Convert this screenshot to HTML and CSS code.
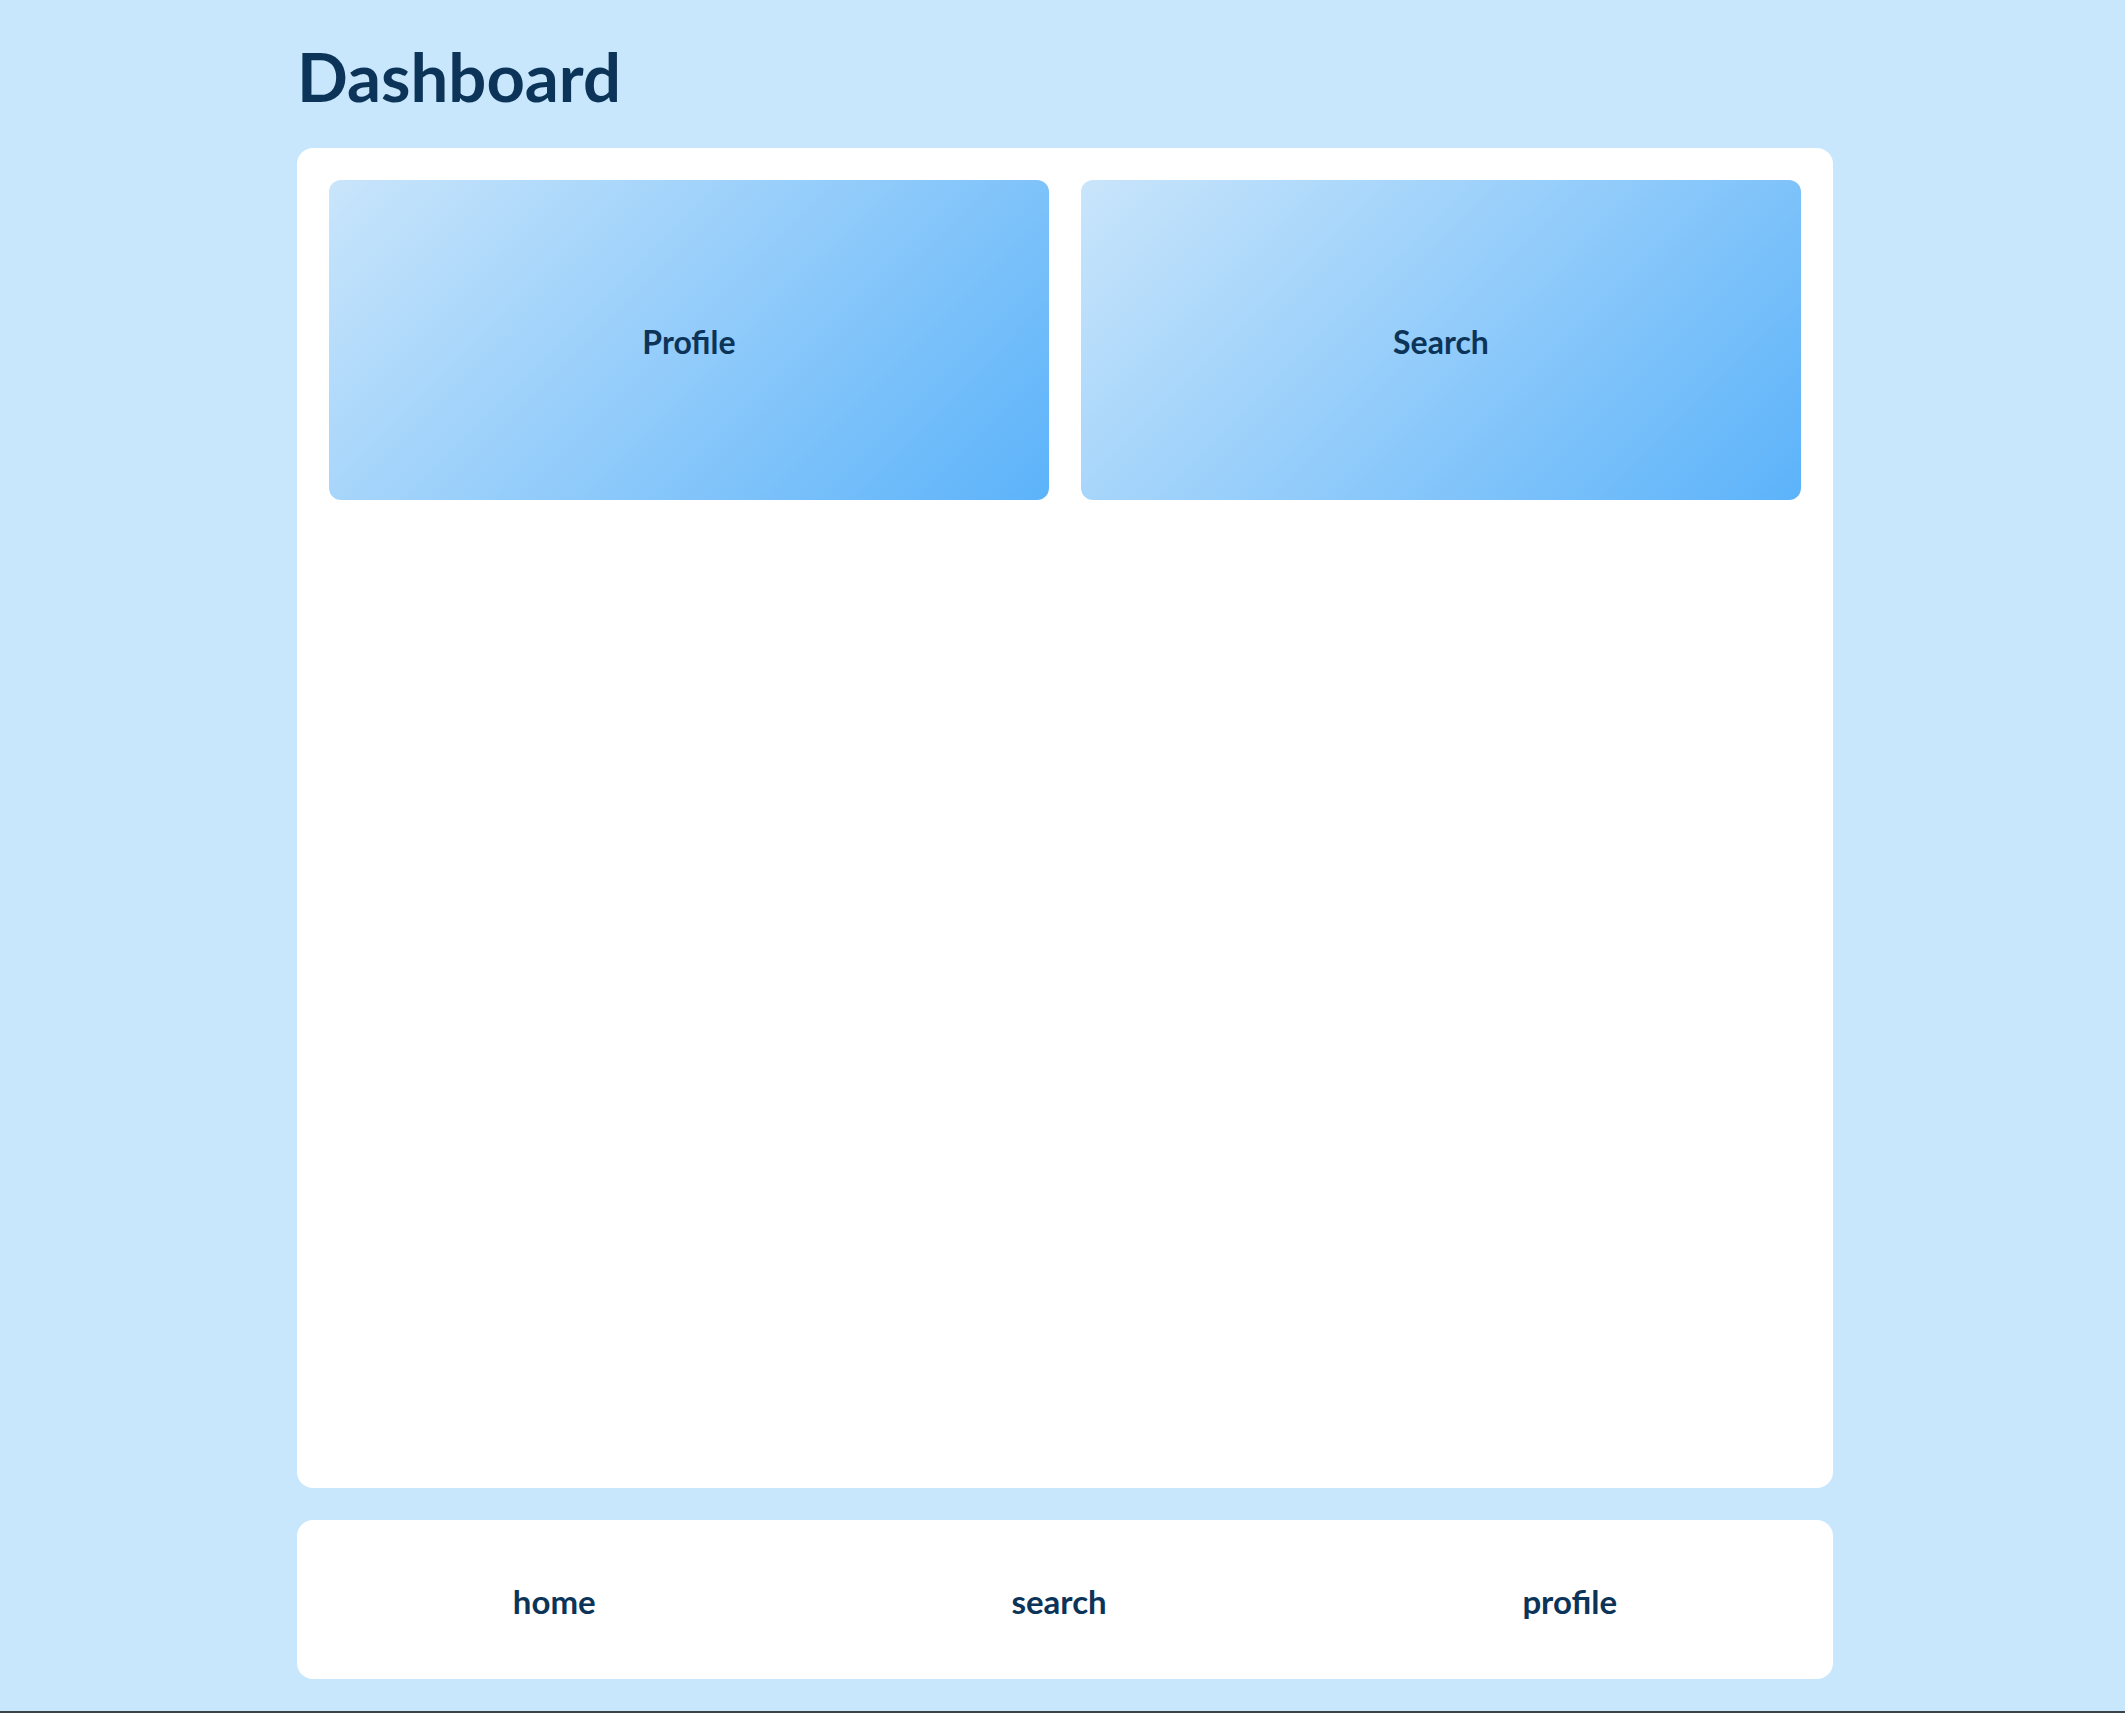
FILE: index.html
```html
<!DOCTYPE html>
<html lang="en">
<head>
    <meta charset="UTF-8">
    <meta name="viewport" content="width=device-width, initial-scale=1.0">
    <title>Dashboard</title>
    <link rel="stylesheet" href="styles.css">
</head>
<body>
    <div class="app">
        <header>
            <h1>Dashboard</h1>
        </header>
        <main class="panel">
            <div class="tiles">
                <a class="tile">Profile</a>
                <a class="tile">Search</a>
            </div>
        </main>
        <nav class="tabbar">
            <a>home</a>
            <a>search</a>
            <a>profile</a>
        </nav>
    </div>
</body>
</html>
```

FILE: styles.css
```css
:root {
    --bg: #c9e7fc;
    --navy: #0c3458;
    --white: #ffffff;
    --tile-light: #c9e5fb;
    --tile-dark: #5cb3fa;
}
* {
    margin: 0;
    padding: 0;
    box-sizing: border-box;
}

html,
body {
    height: 100%;
}

body {
    background-color: var(--bg);
    color: var(--navy);
    font-family: Lato, "Noto Sans", sans-serif;
    border-bottom: 2px solid #3a4147;
    padding-left: 5px;
}

.app {
    width: 1536px;
    height: 100%;
    margin: 0 auto;
    padding: 36px 0 32px;
    display: flex;
    flex-direction: column;
}

header h1 {
    font-size: 67px;
    font-weight: bold;
    line-height: 80px;
    margin-bottom: 32px;
}

.panel {
    flex: 1;
    background-color: var(--white);
    border-radius: 16px;
    padding: 32px;
}

.tiles {
    display: grid;
    grid-template-columns: 1fr 1fr;
    gap: 32px;
}

.tile {
    height: 320px;
    padding-top: 5px;
    display: flex;
    justify-content: center;
    align-items: center;
    border-radius: 12px;
    background: linear-gradient(135deg, var(--tile-light), var(--tile-dark));
    font-size: 32px;
    font-weight: bold;
    line-height: 1.2;
    cursor: pointer;
}

.tabbar {
    margin-top: 32px;
    height: 159px;
    background-color: var(--white);
    border-radius: 16px;
    padding: 5px 8px 0;
    display: flex;
    justify-content: space-around;
    align-items: center;
}

.tabbar a {
    font-size: 33px;
    font-weight: bold;
    line-height: 1.2;
    cursor: pointer;
}
```
